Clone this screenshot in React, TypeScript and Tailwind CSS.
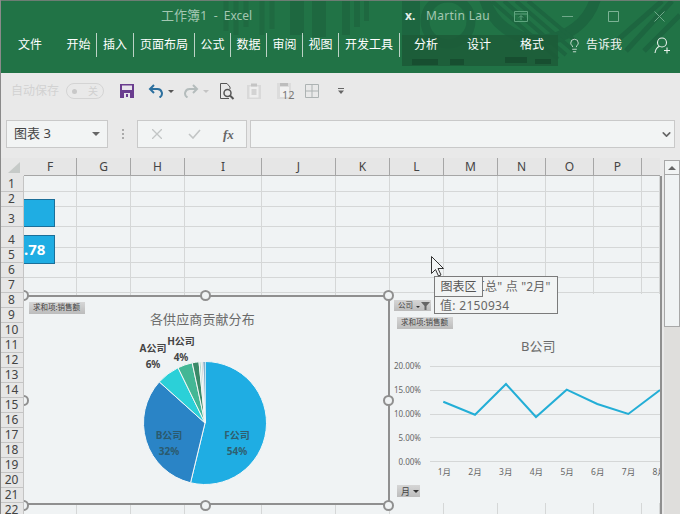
import { ChevronDown, Lightbulb } from "lucide-react";

const tabs = [
  { label: "开始", w: "w-[36px]" },
  { label: "插入", w: "w-[37px]" },
  { label: "页面布局", w: "w-[61px]" },
  { label: "公式", w: "w-[36px]" },
  { label: "数据", w: "w-[36px]" },
  { label: "审阅", w: "w-[36px]" },
  { label: "视图", w: "w-[36px]" },
  { label: "开发工具", w: "w-[61px]" },
];

const columns = ["F", "G", "H", "I", "J", "K", "L", "M", "N", "O", "P", ""];
const rows = Array.from({ length: 22 }, (_, i) => i + 1);

// pie slices clockwise from 12 o'clock, angles in degrees
const slices = [
  { from: 0, to: 193.6, color: "#1fade3" },
  { from: 193.6, to: 312, color: "#2a84c6" },
  { from: 312, to: 334, color: "#2bd0d8" },
  { from: 334, to: 348, color: "#43b795" },
  { from: 348, to: 354.4, color: "#3a8a68" },
  { from: 354.4, to: 356.4, color: "#a9d9c9" },
  { from: 356.4, to: 358.2, color: "#c3cdd0" },
  { from: 358.2, to: 360, color: "#1a6ea8" },
];

const slicePath = (from: number, to: number) => {
  const cx = 70;
  const cy = 70;
  const r = 61.5;
  const point = (deg: number) => {
    const rad = (deg * Math.PI) / 180;
    return `${cx + r * Math.sin(rad)} ${cy - r * Math.cos(rad)}`;
  };
  const large = to - from > 180 ? 1 : 0;
  return `M${cx} ${cy} L${point(from)} A${r} ${r} 0 ${large} 1 ${point(to)} Z`;
};

const pivotButton =
  "absolute flex items-center whitespace-nowrap bg-gradient-to-b from-[#d6d6d6] to-[#bcbcbc] text-[7.5px] leading-none text-[#444]";

const Handle = ({ className }: { className: string }) => (
  <div
    className={`absolute h-[11px] w-[11px] rounded-full border-2 border-[#8f8f8f] bg-[#f0f3f4] ${className}`}
  />
);

const HeaderPattern = () => (
  <svg
    className="absolute inset-0"
    width="680"
    height="73"
    viewBox="0 0 680 73"
    fill="none"
  >
    <g stroke="#1f6a41" strokeWidth="5">
      <path d="M226 0V30M236 0V34M246 0V26M262 0V34M272 0V28" />
    </g>
    <path
      d="M290 0h14v34h-14zM312 0h14v36h-14zM342 0h8v34h-8zM354 0h6v26h-6zM364 0h5v20h-5z"
      fill="#1e6840"
    />
    <path d="M402 0h18v65h-18z" fill="#1d6640" />
    <circle cx="448" cy="20" r="23" stroke="#1d6640" strokeWidth="9" />
    <path d="M484 -4a58 58 0 0 0 112 0" stroke="#1d6640" strokeWidth="11" />
    <path
      d="M492 0l66 58M504 0l62 54M516 0l58 50M528 0l50 42"
      stroke="#1d6640"
      strokeWidth="4"
    />
    <path
      d="M612 44l50-44M626 50l46-50M644 50l36-36"
      stroke="#1d6640"
      strokeWidth="5"
    />
    <path d="M402 34h156v31h-156z" fill="#1c5c38" fillOpacity="0.85" />
    <path d="M412 58h26v6h-26zM450 58h14v6h-14zM505 56h22v6h-22zM535 58h16v5h-16z" fill="#174e30" />
  </svg>
);

const TitleBar = () => (
  <header className="relative h-[73px] shrink-0 overflow-hidden border-t border-[#6d7d74] bg-[#217346]">
    <HeaderPattern />
    <div className="relative flex h-[30px] items-center text-[13px] text-[#a3c7b2]">
      <span className="ml-[161px] w-[244px] whitespace-pre">
        工作簿1<span className="text-[12px]">  -  Excel</span>
      </span>
      <span className="w-[21px] text-[12px] font-bold text-[#e4eee8]">x.</span>
      <span className="w-[88px] text-[12px] tracking-[0.3px]">Martin Lau</span>
      <svg width="14" height="11" viewBox="0 0 14 11" fill="none" stroke="#5fa57f">
        <path d="M.5.5h13v10H.5zM.5 3h13M7 9V5M5 6.5L7 4.5l2 2" />
      </svg>
      <svg className="ml-[34px]" width="11" height="11" viewBox="0 0 11 11" stroke="#6fa98a">
        <path d="M0 5.5h11" />
      </svg>
      <svg className="ml-[35px]" width="11" height="11" viewBox="0 0 11 11" fill="none" stroke="#7cb295">
        <path d="M.5.5h10v10H.5z" />
      </svg>
      <svg className="ml-[35px]" width="11" height="11" viewBox="0 0 11 11" stroke="#6fa98a">
        <path d="M.5.5l10 10M10.5.5l-10 10" />
      </svg>
    </div>
    <nav className="relative flex h-[24px] items-center pt-[4px] text-[12px] leading-none text-white">
      <span className="ml-[18px] w-[43px]">文件</span>
      {tabs.map((tab) => (
        <span
          key={tab.label}
          className={`flex h-[24px] items-center justify-center border-r border-[#bcd3c6] ${tab.w}`}
        >
          {tab.label}
        </span>
      ))}
      <span className="ml-[14px] w-[53px]">分析</span>
      <span className="w-[53px]">设计</span>
      <span className="w-[47px]">格式</span>
      <Lightbulb className="h-[15px] w-[15px] text-[#e8f0eb]" strokeWidth={1.3} />
      <span className="ml-[4px] w-[68px] text-[#f0f5f2]">告诉我</span>
      <svg width="17" height="17" viewBox="0 0 17 17" fill="none" stroke="#e8f0eb" strokeWidth="1.1">
        <circle cx="8" cy="5.5" r="4.5" />
        <path d="M1 16c.5-4 2.5-6 4.5-6.8M10 13.5h6M13 10.500v6" />
      </svg>
    </nav>
  </header>
);

const QuickAccess = () => (
  <div className="flex h-[39px] shrink-0 items-center bg-[#e9e9e9] pb-[3px] pl-[11px]">
    <span className="w-[55px] text-[12px] text-[#d2d2d2]">自动保存</span>
    <div className="flex h-[16px] w-[38px] items-center rounded-full border border-[#d4d4d4] pl-[5px] text-[10px] text-[#d0d0d0]">
      <span className="h-[5px] w-[5px] rounded-full bg-[#c8c8c8]" />
      <span className="ml-[11px]">关</span>
    </div>
    <svg className="ml-[16px]" width="14" height="14" viewBox="0 0 14 14">
      <path d="M0 0h14v14H0z" fill="#6a3d8f" />
      <path d="M2 1.500h10v4.500H2z" fill="#e8e4ec" />
      <path d="M4 9h6v5H4z" fill="#e8e4ec" />
      <path d="M6 10h2v3H6z" fill="#6a3d8f" />
    </svg>
    <svg className="ml-[14px]" width="16" height="14" viewBox="0 0 16 14" fill="none" stroke="#2b6f9e" strokeWidth="2">
      <path d="M6 1L2 5l4 4M2 5h7.500a4.500 4.500 0 0 1 2 8.500" />
    </svg>
    <span className="ml-[4px] h-0 w-0 border-x-[3px] border-t-[3px] border-x-transparent border-t-[#555]" />
    <svg className="ml-[9px]" width="16" height="14" viewBox="0 0 16 14" fill="none" stroke="#b4bcbc" strokeWidth="2">
      <path d="M10 1l4 4-4 4M14 5H6.500a4.500 4.500 0 0 0-2 8.500" />
    </svg>
    <span className="ml-[4px] h-0 w-0 border-x-[3px] border-t-[3px] border-x-transparent border-t-[#c4c4c4]" />
    <svg className="ml-[10px]" width="16" height="17" viewBox="0 0 16 17" fill="none" stroke="#555">
      <path d="M10 15.500H1.500V.5H8L11 4v2" />
      <circle cx="8.500" cy="10" r="3.500" strokeWidth="1.500" />
      <path d="M11 12.500l3.500 3.500" strokeWidth="2" />
    </svg>
    <svg className="ml-[12px]" width="14" height="16" viewBox="0 0 14 16" fill="none">
      <path d="M0 2h14v14H0z" fill="#d9d9d9" />
      <path d="M2.500 3.500h9v11h-9z" fill="#eeeeee" />
      <path d="M4 .5h6v3H4z" fill="#c4c4c4" />
      <path d="M4.500 7h5M4.500 9h5M4.500 11h5" stroke="#b8b8b8" />
    </svg>
    <div className="relative ml-[16px] h-[16px] w-[14px] bg-[#dcdcdc]">
      <div className="absolute left-[3px] top-0 h-[3px] w-[8px] bg-[#bdbdbd]" />
      <div className="absolute left-[3px] top-[4px] h-[10px] w-[9px] bg-[#f1f1f1]" />
      <span className="absolute left-[5px] top-[5px] text-[11px] leading-[14px] text-[#777]">12</span>
    </div>
    <svg className="ml-[14px]" width="14" height="14" viewBox="0 0 14 14" fill="none" stroke="#adb3b3">
      <path d="M.5.5h13v13H.5zM7 .5v13M.5 7h13" />
    </svg>
    <svg className="ml-[19px]" width="6" height="6" viewBox="0 0 6 6" fill="#666">
      <path d="M0 0h6v1H0zM0 2.500h6L3 6z" />
    </svg>
  </div>
);

const FormulaBar = () => (
  <div className="flex h-[46px] shrink-0 bg-[#e9e9e9] pl-[6px] pt-[8px]">
    <div className="flex h-[28px] w-[102px] items-center justify-between border border-[#c9c9c9] bg-[#f2f4f4] pl-[7px] pr-[7px] text-[13px] text-[#444]">
      <span>图表 3</span>
      <span className="h-0 w-0 border-x-[4px] border-t-[4px] border-x-transparent border-t-[#666]" />
    </div>
    <div className="ml-[14px] mr-[13px] flex h-[28px] flex-col items-center justify-center gap-[2px]">
      <span className="h-[2px] w-[2px] bg-[#aaa]" />
      <span className="h-[2px] w-[2px] bg-[#aaa]" />
      <span className="h-[2px] w-[2px] bg-[#aaa]" />
    </div>
    <div className="flex h-[28px] w-[110px] items-center border border-[#c9c9c9] bg-[#f2f4f4]">
      <svg className="ml-[14px]" width="10" height="10" viewBox="0 0 10 10" stroke="#c2c5c5" strokeWidth="1.300">
        <path d="M0 0l10 10M10 0L0 10" />
      </svg>
      <svg className="ml-[26px]" width="13" height="10" viewBox="0 0 13 10" fill="none" stroke="#c2c5c5" strokeWidth="1.600">
        <path d="M1 5l4 4 7-8" />
      </svg>
      <span className="ml-[22px] font-['Liberation_Serif',serif] text-[13px] font-bold italic leading-none text-[#666]">
        fx
      </span>
    </div>
    <div className="ml-[3px] flex h-[28px] w-[425px] items-center justify-end border border-[#c9c9c9] bg-[#f2f4f4] pr-[1px]">
      <ChevronDown className="h-[13px] w-[13px] text-[#666]" strokeWidth={3} />
    </div>
  </div>
);

const Cells = () => (
  <div className="grid grid-cols-[24px_53px_54px_54px_77px_74px_54px_54px_54px_48px_48px_48px_18px_2px] grid-rows-[18px_16px_15px_20px_21px_15px_15px_15px_repeat(15,15px)] text-[12px] leading-none text-[#444]">
    <div className="relative bg-[#e6e6e6]">
      <span className="absolute left-[8px] top-[4px] h-0 w-0 border-b-[11px] border-l-[12px] border-b-[#c6cac8] border-l-transparent" />
    </div>
    {columns.map((col, i) => (
      <div
        key={i}
        className={`flex items-center justify-center border-b border-[#a6a6a6] bg-[#e6e6e6] ${col ? "border-r" : ""}`}
      >
        {col}
      </div>
    ))}
    <div className="bg-[#e9e9e9]" />
    {rows.map((row) => (
      <div key={row} className="contents">
        <div className="flex items-end justify-center border-b border-r border-[#c4c4c4] bg-[#e6e6e6] pb-[1px] text-[12px]">
          {row}
        </div>
        {columns.map((_, i) => (
          <div key={i} className="border-b border-r border-[#d5d7d7] bg-[#f0f3f4]" />
        ))}
        <div className="bg-[#8f8f8f]" />
      </div>
    ))}
  </div>
);

const PieChart = () => (
  <div className="absolute left-[-2px] top-[137px] h-[210px] w-[368px] border-2 border-[#8f8f8f] bg-[#f0f3f4]">
    <div className={`${pivotButton} left-[5px] top-[5px] h-[12px] w-[56px] pl-[4px]`}>
      求和项:销售额
    </div>
    <div className="absolute left-[126px] top-[12px] text-[13px] leading-[20px] tracking-[0.1px] text-[#6a6a6a]">
      各供应商贡献分布
    </div>
    <svg
      className="absolute left-[111px] top-[56px]"
      width="140"
      height="140"
      viewBox="0 0 140 140"
    >
      {slices.map((s) => (
        <path
          key={s.from}
          d={slicePath(s.from, s.to)}
          fill={s.color}
          stroke="#f4f7f7"
          strokeWidth="1"
        />
      ))}
    </svg>
    <div className="absolute left-[114px] top-[43px] w-[30px] text-center text-[10px] font-bold leading-[16px] text-[#444]">
      <div>A公司</div>
      <div>6%</div>
    </div>
    <div className="absolute left-[142px] top-[36px] w-[30px] text-center text-[10px] font-bold leading-[16px] text-[#444]">
      <div>H公司</div>
      <div>4%</div>
    </div>
    <div className="absolute left-[127px] top-[130px] w-[36px] text-center text-[10px] font-bold leading-[16px] text-[#2a5a6e]">
      <div>B公司</div>
      <div>32%</div>
    </div>
    <div className="absolute left-[195px] top-[130px] w-[36px] text-center text-[10px] font-bold leading-[16px] text-[#2f5f70]">
      <div>F公司</div>
      <div>54%</div>
    </div>
  </div>
);

const LineChart = () => (
  <div className="absolute left-[366px] top-[136px] h-[209px] w-[270px] bg-[#f0f3f4]">
    <div className={`${pivotButton} left-[4px] top-[6px] h-[11px] w-[37px] pl-[4px]`}>
      公司
      <span className="ml-[3px] mt-[3px] h-0 w-0 border-x-[2px] border-t-[2px] border-x-transparent border-t-[#333]" />
      <svg className="ml-[1px]" width="9" height="8" viewBox="0 0 9 8" fill="#666">
        <path d="M0 0h9L5.500 4v4h-2V4z" />
      </svg>
    </div>
    <div className={`${pivotButton} left-[7px] top-[23px] h-[12px] w-[56px] pl-[4px]`}>
      求和项:销售额
    </div>
    <div className="absolute left-[131px] top-[42px] text-[13px] leading-[20px] text-[#6a6a6a]">
      B公司
    </div>
    <svg
      className="absolute left-0 top-0"
      width="270"
      height="209"
      viewBox="390 294 270 209"
      fill="none"
    >
      <path
        d="M430 366.500H660M430 390.500H660M430 414.500H660M430 437.500H660M430 461.500H660"
        stroke="#d5d7d7"
      />
      <polyline
        points="443.300,401.700 475,414.700 506,384 536,417 566.700,389.700 597.300,404 628.300,414 660,390"
        stroke="#23aed6"
        strokeWidth="2"
      />
    </svg>
    <div className="absolute left-0 top-[66px] flex h-[108px] w-[31px] flex-col justify-between text-right text-[8px] leading-[12px] text-[#666]">
      <span>20.00%</span>
      <span>15.00%</span>
      <span>10.00%</span>
      <span>5.00%</span>
      <span>0.00%</span>
    </div>
    <div className="absolute left-[39px] top-[172px] flex w-[231px] overflow-hidden whitespace-nowrap text-[8.500px] leading-[12px] text-[#666]">
      {["1月", "2月", "3月", "4月", "5月", "6月", "7月", "8月"].map((m) => (
        <span key={m} className="w-[30.700px] shrink-0 text-center">
          {m}
        </span>
      ))}
    </div>
    <div className={`${pivotButton} left-[7px] top-[191px] h-[12px] w-[23px] pl-[4px] text-[9px]`}>
      月
      <span className="ml-[3px] h-0 w-0 border-x-[3px] border-t-[3px] border-x-transparent border-t-[#333]" />
    </div>
  </div>
);

const App = () => {
  return (
    <div className="relative flex h-[514px] w-[680px] flex-col overflow-hidden bg-[#e9e9e9] font-['Noto_Sans','Noto_Sans_CJK_SC',sans-serif]">
      <TitleBar />
      <QuickAccess />
      <FormulaBar />
      <div className="flex min-h-0 flex-1">
        <div className="relative w-[662px] overflow-hidden">
          <Cells />

          {/* objects on the sheet, clipped by the row header */}
          <div className="absolute bottom-0 left-[24px] right-[2px] top-[18px] overflow-hidden">
            <div className="absolute left-0 top-[-18px] h-[356px] w-[636px]">
              <div className="absolute left-0 top-[41px] h-[28px] w-[31px] border border-l-0 border-[#1b6f99] bg-[#1fade3]" />
              <div className="absolute left-0 top-[77px] flex h-[29px] w-[31px] items-center border border-l-0 border-[#1b6f99] bg-[#1fade3] text-[15px] font-bold leading-none text-white">
                .78
              </div>
              <LineChart />
              <PieChart />
              <Handle className="left-[-6px] top-[132px]" />
              <Handle className="left-[176px] top-[132px]" />
              <Handle className="left-[359px] top-[132px]" />
              <Handle className="left-[-6px] top-[237px]" />
              <Handle className="left-[359px] top-[237px]" />
              <Handle className="left-[-6px] top-[342px]" />
              <Handle className="left-[176px] top-[342px]" />
              <Handle className="left-[359px] top-[342px]" />
            </div>
          </div>

          {/* hover tooltips */}
          <div className="absolute left-[434px] top-[118px] h-[38px] w-[124px] border border-[#7b7b7b] bg-[#f2f4f4] pl-[5px] text-[12px] leading-[19px] text-[#666]">
            <div className="whitespace-pre tracking-[0.2px]">{'系列 "汇总" 点 "2月"'}</div>
            <div className="tracking-[0.3px]">值: 2150934</div>
          </div>
          <div className="absolute left-[434px] top-[118px] h-[21px] w-[49px] border border-[#7b7b7b] bg-[#f2f4f4] text-center text-[12px] leading-[19px] text-[#555]">
            图表区
          </div>
          <svg
            className="absolute left-[431px] top-[98px]"
            width="13"
            height="21"
            viewBox="0 0 13 21"
          >
            <path
              d="M.5.5v17l4-4 3 6.500 2.500-1-3-6.500h5.500z"
              fill="#f4f6f6"
              stroke="#333"
              strokeWidth="1"
            />
          </svg>
        </div>
        <div className="ml-[2px] flex w-[16px] flex-col pt-[2px]">
          <div className="flex h-[15px] shrink-0 items-center justify-center border border-[#a8a8a8] bg-[#f2f4f4]">
            <span className="h-0 w-0 border-x-[4px] border-b-[4px] border-x-transparent border-b-[#666]" />
          </div>
          <div className="h-[152px] shrink-0 border-x border-b border-[#a8a8a8] bg-[#f0f3f4]" />
          <div className="flex-1 bg-[#dfdedc]" />
        </div>
      </div>
      <div className="absolute bottom-0 left-0 top-0 w-px bg-[#8a8a8a]" />
    </div>
  );
};

export default App;
